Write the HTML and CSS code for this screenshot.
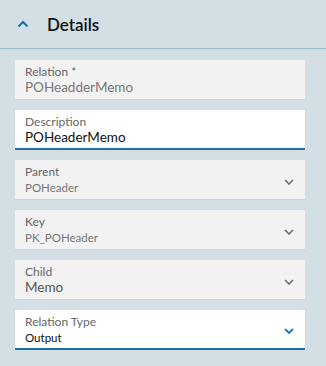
FILE: index.html
```html
<!DOCTYPE html>
<html lang="en">
<head>
    <meta charset="UTF-8">
    <title>Details</title>
    <link rel="stylesheet" href="styles.css">
</head>
<body>
    <div class="panel">
        <!-- Section header -->
        <div class="panel-header">
            <svg class="collapse-icon" width="12" height="8" viewBox="0 0 12 8">
                <path d="M1.5 6.5 L6 2 L10.5 6.5" fill="none" stroke="#1f6fa5" stroke-width="2"/>
            </svg>
            <span class="panel-title">Details</span>
        </div>

        <div class="fields">
            <div class="field readonly">
                <div class="field-body">
                    <span class="field-label">Relation *</span>
                    <span class="field-value size-lg">POHeadderMemo</span>
                </div>
            </div>

            <div class="field editable">
                <div class="field-body">
                    <span class="field-label">Description</span>
                    <span class="field-value size-lg black">POHeaderMemo</span>
                </div>
            </div>

            <div class="field readonly">
                <div class="field-body">
                    <span class="field-label">Parent</span>
                    <span class="field-value size-sm">POHeader</span>
                </div>
                <svg class="dropdown-icon" width="10" height="6" viewBox="0 0 10 6">
                    <path d="M1 1 L5 5 L9 1" fill="none" stroke="#6e6e6e" stroke-width="1.6"/>
                </svg>
            </div>

            <div class="field readonly">
                <div class="field-body">
                    <span class="field-label">Key</span>
                    <span class="field-value size-sm">PK_POHeader</span>
                </div>
                <svg class="dropdown-icon" width="10" height="6" viewBox="0 0 10 6">
                    <path d="M1 1 L5 5 L9 1" fill="none" stroke="#6e6e6e" stroke-width="1.6"/>
                </svg>
            </div>

            <div class="field readonly">
                <div class="field-body">
                    <span class="field-label">Child</span>
                    <span class="field-value size-lg dark">Memo</span>
                </div>
                <svg class="dropdown-icon" width="10" height="6" viewBox="0 0 10 6">
                    <path d="M1 1 L5 5 L9 1" fill="none" stroke="#6e6e6e" stroke-width="1.6"/>
                </svg>
            </div>

            <div class="field editable">
                <div class="field-body">
                    <span class="field-label">Relation Type</span>
                    <span class="field-value size-sm black">Output</span>
                </div>
                <svg class="dropdown-icon" width="10" height="6" viewBox="0 0 10 6">
                    <path d="M1 1 L5 5 L9 1" fill="none" stroke="#1f78c1" stroke-width="1.8"/>
                </svg>
            </div>
        </div>
    </div>
</body>
</html>
```

FILE: styles.css
```css
body {
    margin: 0;
    background-color: #d3dfe4;
    font-family: 'Lato', 'Noto Sans', sans-serif;
    color: #222;
}

.panel {
    width: 326px;
    height: 366px;
}

.panel-header {
    display: flex;
    align-items: center;
    height: 49px;
    border-bottom: 1px solid #9dbccb;
    box-sizing: border-box;
    padding-left: 17px;
}

.collapse-icon {
    margin-right: 18px;
}

.panel-title {
    font-size: 17px;
    font-weight: 600;
    color: #111;
}

.fields {
    display: flex;
    flex-direction: column;
    gap: 10px;
    padding: 11px 21px 0 15px;
}

.field {
    display: flex;
    align-items: center;
    height: 40px;
    box-sizing: border-box;
    padding: 0 11px 0 10px;
}

.field.readonly {
    background-color: #f2f2f2;
    border-bottom: 1px solid #d2d2d2;
}

.field.editable {
    background-color: #fff;
    border-bottom: 2px solid #1d6fa5;
}

.field-body {
    flex: 1;
    display: flex;
    flex-direction: column;
    padding-top: 1px;
}

.field-label {
    font-size: 12px;
    line-height: 15px;
    color: #666;
}

.field-value {
    line-height: 17px;
    color: #777;
}

.size-lg { font-size: 13.5px; }
.size-sm { font-size: 11.5px; }

.field-value.dark {
    color: #555;
}

.field-value.black {
    color: #111;
}

.dropdown-icon {
    margin-top: 4px;
}
```
